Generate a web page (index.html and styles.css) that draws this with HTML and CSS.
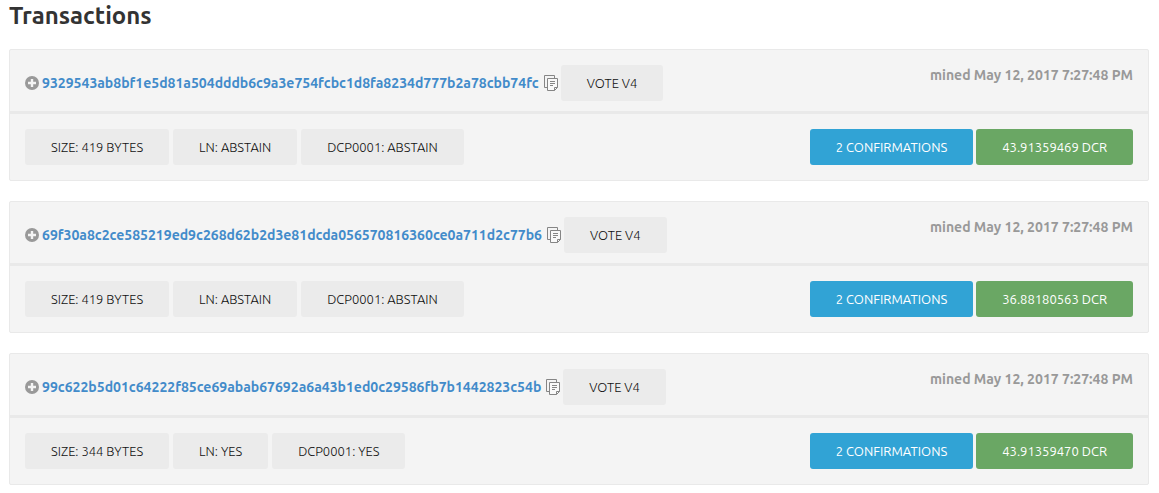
FILE: index.html
```html
<!DOCTYPE html>
<html lang="en">
<head>
<meta charset="utf-8">
<title>Transactions</title>
<link rel="stylesheet" href="styles.css">
</head>
<body>
<svg class="sprite" aria-hidden="true">
  <symbol id="icon-plus" viewBox="0 0 14 14">
    <circle cx="7" cy="7" r="7" fill="#999"/>
    <path d="M7 3v8M3 7h8" stroke="#f4f4f4" stroke-width="2.4"/>
  </symbol>
  <symbol id="icon-copy" viewBox="0 0 14 16">
    <path d="M3 12.5H.5V.5h10V3" fill="none" stroke="#858585"/>
    <path d="M3.5 3.5h10v9l-3 3h-7z" fill="#f9f9f9" stroke="#858585"/>
    <path d="M10.5 15.5v-3h3M6 6.5h5M6 8.5h5M6 10.5h3" fill="none" stroke="#858585"/>
  </symbol>
</svg>
<main class="page">
  <h1 class="title">Transactions</h1>

  <article class="tx">
    <header class="tx-head">
      <button class="icon-btn" type="button" aria-label="Expand"><svg class="plus"><use href="#icon-plus"/></svg></button>
      <a class="hash" href="#tx1">9329543ab8bf1e5d81a504dddb6c9a3e754fcbc1d8fa8234d777b2a78cbb74fc</a>
      <button class="icon-btn" type="button" aria-label="Copy"><svg class="copy"><use href="#icon-copy"/></svg></button>
      <span class="tag">VOTE V4</span>
      <time class="mined">mined May 12, 2017 7:27:48 PM</time>
    </header>
    <footer class="tx-foot">
      <div class="details">
        <span class="tag">SIZE: 419 BYTES</span>
        <span class="tag">LN: ABSTAIN</span>
        <span class="tag">DCP0001: ABSTAIN</span>
      </div>
      <button class="tag confirmations" type="button">2 CONFIRMATIONS</button>
      <button class="tag amount" type="button">43.91359469 DCR</button>
    </footer>
  </article>

  <article class="tx">
    <header class="tx-head">
      <button class="icon-btn" type="button" aria-label="Expand"><svg class="plus"><use href="#icon-plus"/></svg></button>
      <a class="hash" href="#tx2">69f30a8c2ce585219ed9c268d62b2d3e81dcda056570816360ce0a711d2c77b6</a>
      <button class="icon-btn" type="button" aria-label="Copy"><svg class="copy"><use href="#icon-copy"/></svg></button>
      <span class="tag">VOTE V4</span>
      <time class="mined">mined May 12, 2017 7:27:48 PM</time>
    </header>
    <footer class="tx-foot">
      <div class="details">
        <span class="tag">SIZE: 419 BYTES</span>
        <span class="tag">LN: ABSTAIN</span>
        <span class="tag">DCP0001: ABSTAIN</span>
      </div>
      <button class="tag confirmations" type="button">2 CONFIRMATIONS</button>
      <button class="tag amount" type="button">36.88180563 DCR</button>
    </footer>
  </article>

  <article class="tx">
    <header class="tx-head">
      <button class="icon-btn" type="button" aria-label="Expand"><svg class="plus"><use href="#icon-plus"/></svg></button>
      <a class="hash" href="#tx3">99c622b5d01c64222f85ce69abab67692a6a43b1ed0c29586fb7b1442823c54b</a>
      <button class="icon-btn" type="button" aria-label="Copy"><svg class="copy"><use href="#icon-copy"/></svg></button>
      <span class="tag">VOTE V4</span>
      <time class="mined">mined May 12, 2017 7:27:48 PM</time>
    </header>
    <footer class="tx-foot">
      <div class="details">
        <span class="tag">SIZE: 344 BYTES</span>
        <span class="tag">LN: YES</span>
        <span class="tag">DCP0001: YES</span>
      </div>
      <button class="tag confirmations" type="button">2 CONFIRMATIONS</button>
      <button class="tag amount" type="button">43.91359470 DCR</button>
    </footer>
  </article>
</main>
</body>
</html>
```

FILE: styles.css
```css
* {
  box-sizing: border-box;
}

body {
  margin: 0;
  background: #fff;
  color: #333;
  font-family: Ubuntu, "Open Sans", "Noto Sans", sans-serif;
  font-size: 14px;
  line-height: 20px;
}

.sprite {
  display: none;
}

.page {
  padding: 0 10px 8px 9px;
}

.title {
  margin: 0 0 17px;
  font-size: 24px;
  font-weight: 600;
  line-height: 32px;
}

.tx {
  margin-bottom: 20px;
  border: 1px solid #e9e9e9;
  border-radius: 2px;
  background: #f4f4f4;
}

.tx-head,
.tx-foot {
  display: flex;
  align-items: center;
  gap: 3px;
  padding: 15px;
}

.tx-head {
  padding-bottom: 10px;
  border-bottom: 3px solid #e9e9e9;
}

.details {
  display: flex;
  gap: 4px;
}

.icon-btn {
  display: flex;
  padding: 0;
  border: 0;
  background: none;
  cursor: pointer;
}

.plus {
  width: 14px;
  height: 14px;
}

.copy {
  width: 14px;
  height: 16px;
}

.hash {
  margin-right: 2px;
  color: #428bca;
  font-weight: 600;
  text-decoration: none;
}

.mined {
  align-self: flex-start;
  margin-left: auto;
  color: #999;
  font-weight: 600;
}

.tag {
  padding: 8px 26px;
  border: 0;
  border-radius: 3px;
  background: #ebebeb;
  color: #111;
  font-family: inherit;
  font-size: 13px;
  font-weight: 300;
  line-height: 20px;
  white-space: nowrap;
}

.confirmations,
.amount {
  color: #fff;
  font-weight: 400;
}

.confirmations {
  margin-left: auto;
  background: #31a3d5;
}

.amount {
  background: #6aa764;
}
```
